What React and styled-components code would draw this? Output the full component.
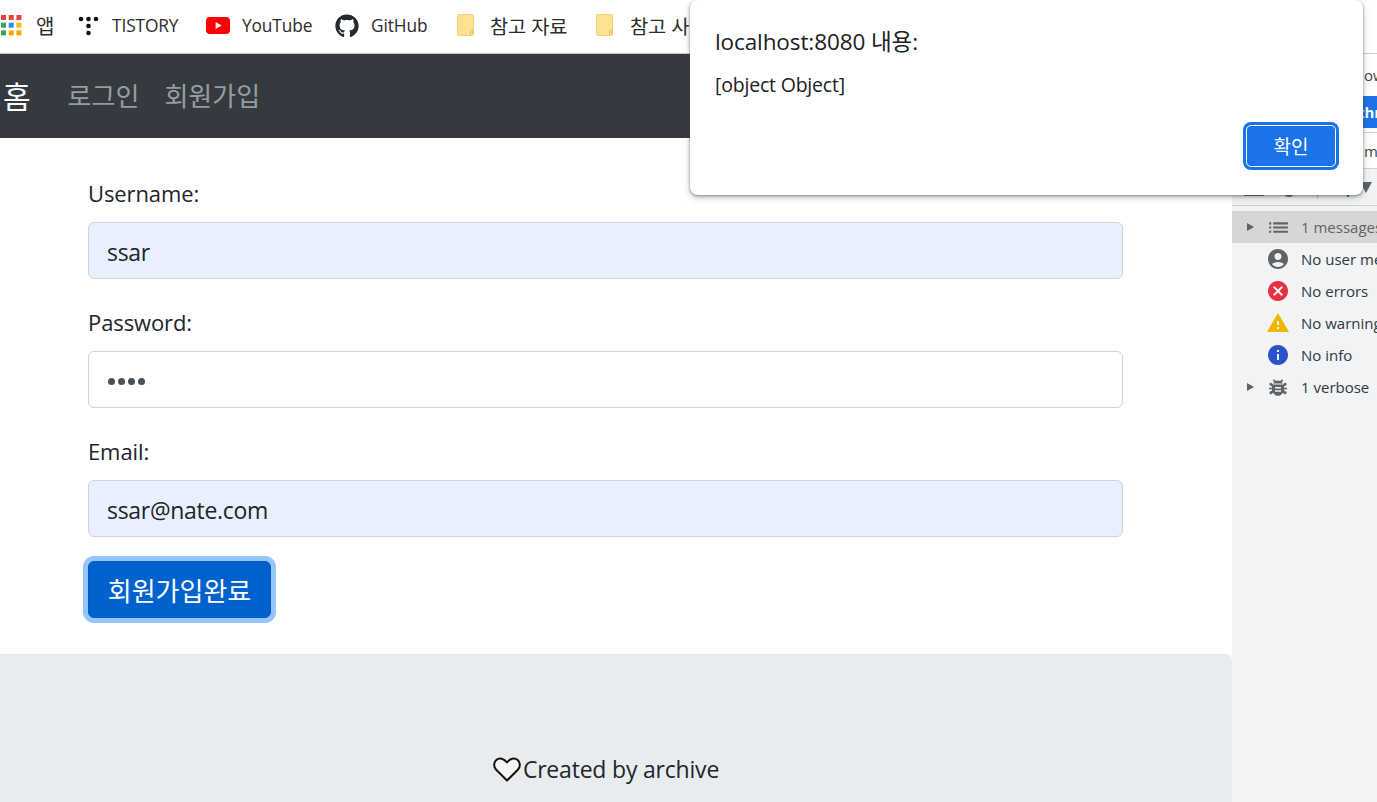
import styled, { createGlobalStyle } from "styled-components";
import { FaGithub } from "react-icons/fa";
import { MdAccountCircle, MdCancel, MdWarning, MdInfo, MdList } from "react-icons/md";

const sans = `"Open Sans", "Noto Sans CJK KR", sans-serif`;

const GlobalStyle = createGlobalStyle`
    html, body {
        margin: 0;
        height: 100%;
        overflow: hidden;
        background: #fff;
    }
    body {
        font-family: ${sans};
        color: #212529;
    }
    * {
        box-sizing: border-box;
    }
`;

const Screen = styled.div`
    position: relative;
    width: 1377px;
    height: 802px;
    overflow: hidden;
    display: flex;
    flex-direction: column;
`;

const BookmarkBar = styled.div`
    height: 54px;
    flex: none;
    display: flex;
    align-items: center;
    padding: 0 0 2px 1px;
    border-bottom: 1px solid #c8cacc;
    background: #fff;
    overflow: hidden;
`;
const Bookmark = styled.div`
    display: flex;
    align-items: center;
    flex: none;
    gap: ${(props) => props.$gap}px;
    width: ${(props) => props.$width}px;
    font-size: ${(props) => props.$size || 17.3}px;
    letter-spacing: -0.1px;
    color: #2b2b2b;
    white-space: nowrap;
    svg {
        flex: none;
    }
`;

const Body = styled.div`
    flex: 1;
    display: flex;
    min-height: 0;
`;
const Page = styled.div`
    width: 1232px;
    flex: none;
    display: flex;
    flex-direction: column;
`;

const Navbar = styled.nav`
    height: 84px;
    flex: none;
    display: flex;
    align-items: center;
    background: #343a40;
    padding: 0 0 3px 3px;
    font-size: 26px;
`;
const Brand = styled.span`
    color: #fff;
    font-size: 30px;
    margin-right: 37px;
`;
const NavLink = styled.span`
    color: rgba(255, 255, 255, 0.5);
    margin-right: 25px;
`;

const Form = styled.form`
    width: 1035px;
    margin: 36px 0 36px 88px;
`;
const Group = styled.div`
    margin-bottom: 24px;
`;
const Label = styled.label`
    display: block;
    height: 36px;
    line-height: 38px;
    margin-bottom: 12px;
    font-size: 22px;
    letter-spacing: -0.1px;
`;
const Input = styled.div`
    height: 57px;
    padding: 3px 18px 0;
    display: flex;
    align-items: center;
    border: 1px solid #ced4da;
    border-radius: 6px;
    font-size: 23px;
    letter-spacing: -0.3px;
    color: #212529;
    background: ${(props) => (props.$filled ? "#e8f0fe" : "#fff")};
`;
const PasswordDots = styled.span`
    display: flex;
    gap: 3px;
    padding-left: 1px;
    i {
        width: 7px;
        height: 7px;
        border-radius: 50%;
        background: #495057;
    }
`;
const SubmitButton = styled.button`
    display: block;
    width: 183px;
    height: 57px;
    padding: 0;
    font-family: inherit;
    font-size: 26px;
    color: #fff;
    background: #0062cc;
    border: 1px solid #005cbf;
    border-radius: 6px;
    box-shadow: 0 0 0 5px #95c5fb;
`;

const Footer = styled.footer`
    flex: 1;
    display: flex;
    align-items: flex-end;
    justify-content: center;
    padding: 0 20px 15px 0;
    background: #e9ecef;
    border-radius: 0 6px 0 0;
    font-size: 23px;
    letter-spacing: -0.2px;
`;
const FooterLine = styled.div`
    display: flex;
    align-items: center;
    gap: 2px;
    line-height: 36px;
`;

const DevTools = styled.aside`
    flex: 1;
    display: flex;
    flex-direction: column;
    min-width: 0;
    background: #fff;
    font-size: 15px;
    color: #303942;
    white-space: nowrap;
    overflow: hidden;
`;
const DevStrip = styled.div`
    height: ${(props) => props.$height}px;
    flex: none;
    display: flex;
    align-items: center;
    padding-left: ${(props) => props.$pad || 0}px;
    color: ${(props) => props.$color || "#444"};
    background: ${(props) => props.$bg || "transparent"};
    font-weight: ${(props) => props.$weight || 400};
    border-bottom: ${(props) => (props.$line ? "1px solid #cfd1d3" : "none")};
`;
const Sidebar = styled.div`
    flex: 1;
    padding-top: 5px;
    background: #f1f3f4;
`;
const SideRow = styled.div`
    height: 32px;
    display: flex;
    align-items: center;
    background: ${(props) => (props.$selected ? "#d6d6d6" : "transparent")};
    color: ${(props) => (props.$selected ? "#5f6368" : "#303942")};
`;
const Arrow = styled.span`
    width: 0;
    height: 0;
    flex: none;
    margin-left: 15px;
    border-left: 7px solid #5f6368;
    border-top: 4.5px solid transparent;
    border-bottom: 4.5px solid transparent;
`;
const SideIcon = styled.span`
    width: 20px;
    height: 20px;
    flex: none;
    display: flex;
    align-items: center;
    justify-content: center;
    font-size: 24px;
    margin: 0 13px 0 ${(props) => (props.$arrow ? 14 : 36)}px;
    color: ${(props) => props.$color || "#5f6368"};
    svg {
        flex: none;
    }
`;

const Dialog = styled.div`
    position: absolute;
    top: 0;
    left: 690px;
    width: 673px;
    height: 195px;
    padding: 24px 25px 0;
    background: #fff;
    border-radius: 8px;
    box-shadow: 0 1px 3px rgba(60, 64, 67, 0.55), 0 3px 7px rgba(60, 64, 67, 0.25);
    display: flex;
    flex-direction: column;
    color: #202124;
`;
const DialogTitle = styled.div`
    height: 36px;
    line-height: 36px;
    font-size: 22.5px;
    letter-spacing: -0.1px;
`;
const DialogText = styled.div`
    margin-top: 8px;
    height: 34px;
    line-height: 34px;
    font-size: 19.5px;
    letter-spacing: -0.2px;
`;
const DialogActions = styled.div`
    display: flex;
    justify-content: flex-end;
    margin: 23px 2px 0 0;
`;
const OkButton = styled.button`
    width: 90px;
    height: 42px;
    padding: 0;
    font-family: inherit;
    font-size: 19px;
    color: #fff;
    background: #1a73e8;
    border: 1.5px solid #fff;
    border-radius: 5px;
    box-shadow: 0 0 0 3px #1a73e8;
`;

function AppsIcon() {
    const colors = ["#ea4335", "#ea4335", "#ea4335", "#34a853", "#2d8cf0", "#fbbc04", "#34a853", "#fba504", "#fba504"];
    return (
        <svg width="21" height="21" viewBox="0 0 21 21">
            {colors.map((color, i) => (
                <rect key={i} x={(i % 3) * 7.7} y={Math.floor(i / 3) * 7.7} width="5" height="5" fill={color} />
            ))}
        </svg>
    );
}

function TistoryIcon() {
    return (
        <svg width="21" height="21" viewBox="0 0 21 21" fill="#111">
            <circle cx="3" cy="4" r="2.3" />
            <circle cx="10.5" cy="4" r="2.3" />
            <circle cx="18" cy="4" r="2.3" />
            <circle cx="10.5" cy="11" r="2.3" />
            <circle cx="10.5" cy="18" r="2.3" />
        </svg>
    );
}

function YoutubeIcon() {
    return (
        <svg width="24" height="17" viewBox="0 0 24 17">
            <rect width="24" height="17" rx="4" fill="#f00" />
            <path d="M9.6 5v7l6-3.5z" fill="#fff" />
        </svg>
    );
}

function FolderIcon() {
    return (
        <svg width="18" height="23" viewBox="0 0 18 23">
            <path d="M1.5.5h14a1 1 0 0 1 1 1v19a1 1 0 0 1-1 1h-14a1 1 0 0 1-1-1v-19a1 1 0 0 1 1-1z" fill="#fde293" stroke="#f5d36f" />
            <path d="M13.5 21v-4a1.2 1.2 0 0 1 2.4 0v3" fill="none" stroke="#e9bf52" />
        </svg>
    );
}

function HeartIcon() {
    return (
        <svg width="28" height="25" viewBox="0 0 28 25">
            <path
                d="M14 23.5 3.2 12.8C.3 9.8.7 5.4 3.3 3.1 6.4.4 11 1.3 14 5.5 17 1.3 21.6.4 24.7 3.1c2.6 2.3 3 6.7.1 9.7z"
                fill="#f4f4f4"
                stroke="#111"
                strokeWidth="2"
                strokeLinejoin="round"
            />
        </svg>
    );
}

function BugIcon() {
    return (
        <svg width="20" height="20" viewBox="0 0 20 20" fill="currentColor">
            <path d="M6 2.2 7.8 4a5 5 0 0 1 4.4 0L14 2.2l1.200 1.200-1.500 1.500c.6.500 1 1.100 1.300 1.600H5c.3-.5.7-1.100 1.300-1.600L4.800 3.400z" />
            <path d="M1.500 6.500 3 5.500 5 7.500h10l2-2 1.500 1V8L16 9.500v1.300h3v1.500h-3v1.300l2.500 1.500v1.500l-1.500 1-2.200-1.900C13.800 17.600 12 18.800 10 18.800s-3.800-1.200-4.800-3.100L3 17.600l-1.500-1v-1.500L4 13.600v-1.300H1v-1.500h3V9.500L1.500 8z" />
            <path d="M7 10h6v1.500H7zM7 13.200h6v1.500H7z" fill="#f1f3f4" />
        </svg>
    );
}

// the console toolbar, mostly hidden behind the alert
function ToolbarGlyphs() {
    return (
        <svg width="145" height="36" viewBox="0 0 145 36" fill="#5f6368">
            <rect x="12" y="25" width="20" height="2" />
            <path d="M52 25h10c-1 2-2.500 3-5 3s-4-1-5-3z" />
            <rect x="85" y="24" width="1" height="6" fill="#bdbdbd" />
            <rect x="115" y="24" width="2" height="4" />
            <path d="M128 13h12l-6 11z" />
        </svg>
    );
}

const bookmarks = [
    { width: 77, gap: 14, size: 20, icon: <AppsIcon />, label: "앱" },
    { width: 128, gap: 13, icon: <TistoryIcon />, label: "TISTORY" },
    { width: 129, gap: 12, icon: <YoutubeIcon />, label: "YouTube" },
    { width: 122, gap: 12, icon: <FaGithub size={24} color="#24292e" />, label: "GitHub" },
    { width: 139, gap: 15, size: 19.8, icon: <FolderIcon />, label: "참고 자료" },
    { width: 120, gap: 16, size: 19.8, icon: <FolderIcon />, label: "참고 사이트" },
];

const sideRows = [
    { label: "1 messages", arrow: true, selected: true, icon: <MdList size={25} /> },
    { label: "No user messages", icon: <MdAccountCircle /> },
    { label: "No errors", icon: <MdCancel />, color: "#e8303f" },
    { label: "No warnings", icon: <MdWarning />, color: "#f2b600" },
    { label: "No info", icon: <MdInfo />, color: "#2a52c9" },
    { label: "1 verbose", arrow: true, icon: <BugIcon /> },
];

export default function App() {
    return (
        <Screen>
            <GlobalStyle />
            <BookmarkBar>
                {bookmarks.map((mark) => (
                    <Bookmark key={mark.label} $width={mark.width} $gap={mark.gap} $size={mark.size}>
                        {mark.icon}
                        {mark.label}
                    </Bookmark>
                ))}
            </BookmarkBar>
            <Body>
                <Page>
                    <Navbar>
                        <Brand>홈</Brand>
                        <NavLink>로그인</NavLink>
                        <NavLink>회원가입</NavLink>
                    </Navbar>
                    <Form>
                        <Group>
                            <Label>Username:</Label>
                            <Input $filled>ssar</Input>
                        </Group>
                        <Group>
                            <Label>Password:</Label>
                            <Input>
                                <PasswordDots>
                                    <i />
                                    <i />
                                    <i />
                                    <i />
                                </PasswordDots>
                            </Input>
                        </Group>
                        <Group>
                            <Label>Email:</Label>
                            <Input $filled>ssar@nate.com</Input>
                        </Group>
                        <SubmitButton type="button">회원가입완료</SubmitButton>
                    </Form>
                    <Footer>
                        <FooterLine>
                            <HeartIcon />
                            Created by archive
                        </FooterLine>
                    </Footer>
                </Page>
                <DevTools>
                    <DevStrip $height={42} $pad={132}>
                        ow
                    </DevStrip>
                    <DevStrip $height={32} $pad={126} $bg="#1a73e8" $color="#fff" $weight={700}>
                        thr
                    </DevStrip>
                    <DevStrip $height={5} $line />
                    <DevStrip $height={36} $line $pad={132}>
                        me
                    </DevStrip>
                    <DevStrip $height={37} $line $bg="#f1f3f4">
                        <ToolbarGlyphs />
                    </DevStrip>
                    <Sidebar>
                        {sideRows.map((row) => (
                            <SideRow key={row.label} $selected={row.selected}>
                                {row.arrow && <Arrow />}
                                <SideIcon $arrow={row.arrow} $color={row.color}>
                                    {row.icon}
                                </SideIcon>
                                {row.label}
                            </SideRow>
                        ))}
                    </Sidebar>
                </DevTools>
            </Body>
            <Dialog>
                <DialogTitle>localhost:8080 내용:</DialogTitle>
                <DialogText>[object Object]</DialogText>
                <DialogActions>
                    <OkButton type="button">확인</OkButton>
                </DialogActions>
            </Dialog>
        </Screen>
    );
}
